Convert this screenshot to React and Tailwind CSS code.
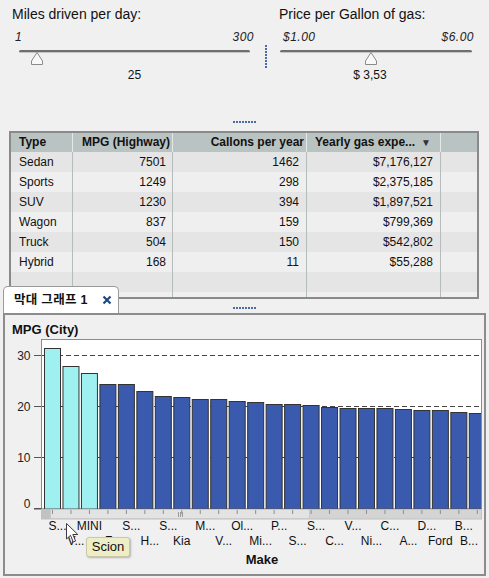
import React from 'react';

const rows = [
  ['Sedan', '7501', '1462', '$7,176,127'],
  ['Sports', '1249', '298', '$2,375,185'],
  ['SUV', '1230', '394', '$1,897,521'],
  ['Wagon', '837', '159', '$799,369'],
  ['Truck', '504', '150', '$542,802'],
  ['Hybrid', '168', '11', '$55,288'],
  ['', '', '', ''],
  ['', '', '', ''],
];

// bar tops in page pixels, zero line at y=509
const tops = [
  348, 366, 373, 384, 384, 391, 396, 397, 399, 399, 401, 402, 404, 404, 405, 407, 408, 408,
  408, 409, 410, 410, 412, 413,
];
const rowA = ['S...', 'MINI', 'S...', 'S...', 'M...', 'Ol...', 'P...', 'S...', 'V...', 'C...', 'D...', 'B...'];
const rowB = ['V...', 'F...', 'H...', 'Kia', 'V...', 'Mi...', 'S...', 'C...', 'Ni...', 'A...', 'Ford', 'B...'];

const barX = i => 44 + i * 18.47;

function Thumb() {
  return (
    <svg width="12" height="13" viewBox="0 0 12 13">
      <polygon points="6,0.5 11.5,9 11.5,12.5 0.5,12.5 0.5,9" fill="#f8f8f8" stroke="#8a8a8a" />
    </svg>
  );
}

function Slider({ label, min, max, value, thumbLeft, width, valuePad }) {
  return (
    <div>
      <div className="text-[14px] leading-[16px] text-[#111]">{label}</div>
      <div
        className="mt-[8px] flex justify-between text-[12px] leading-[14px] italic tracking-[0.5px] text-[#222]"
        style={{ marginLeft: min === '1' ? 3 : 4, width: width - (min === '1' ? -8 : 1) }}
      >
        <span>{min}</span>
        <span>{max}</span>
      </div>
      <div className="relative mt-[3px] h-[14px]" style={{ marginLeft: min === '1' ? 7 : 1, width }}>
        <div className="mt-[6px] h-[3px] rounded-full border-t-2 border-[#6f6f6f] bg-[#c4c4c4]" />
        <div className="absolute top-[2px]" style={{ left: thumbLeft }}>
          <Thumb />
        </div>
      </div>
      <div
        className="mt-[4px] text-center text-[12px] leading-[14px] text-[#111]"
        style={{ marginLeft: min === '1' ? 7 : 1, width, paddingRight: valuePad }}
      >
        {value}
      </div>
    </div>
  );
}

function Chart() {
  return (
    <svg width="479" height="235" viewBox="5 339 479 235">
      <defs>
        <clipPath id="plot">
          <rect x="41" y="339" width="440" height="171" />
        </clipPath>
      </defs>
      <rect x="41.5" y="339.5" width="440" height="170" fill="#fff" stroke="#8c8c8c" />
      {[355.5, 406.5, 457.5].map(y => (
        <line key={y} x1="42" x2="481" y1={y} y2={y} stroke="#444" strokeDasharray="5 3" />
      ))}
      {[
        ['30', 355.5, 360],
        ['20', 406.5, 411],
        ['10', 457.5, 462],
        ['0', 508.5, 508],
      ].map(([t, y, b]) => (
        <g key={t}>
          <line x1="34" x2="41" y1={y} y2={y} stroke="#555" />
          <text x="30.5" y={b} fontSize="12" textAnchor="end" fill="#222">
            {t}
          </text>
        </g>
      ))}
      <g clipPath="url(#plot)">
        {tops.map((t, i) => (
          <rect
            key={i}
            x={barX(i) + 0.5}
            y={t + 0.5}
            width="16"
            height={509 - t}
            fill={i < 3 ? '#9ff0f0' : '#3a5aae'}
            stroke="#333"
          />
        ))}
      </g>
      <line x1="34" x2="481" y1="509" y2="509" stroke="#555" />
      {/* scroll strip */}
      <rect x="41.5" y="509.5" width="440" height="9.5" fill="#d4d4d4" stroke="#c0c0c0" />
      <rect x="41.5" y="509.5" width="9" height="9.5" fill="#c2c2c2" />
      <rect x="50.5" y="509.5" width="259" height="9" rx="1.5" fill="#e3e3e3" stroke="#cacaca" />
      {tops.map((_, i) => (
        <line key={i} x1={barX(i) + 8.5} x2={barX(i) + 8.5} y1="510" y2="514" stroke="#8e8e8e" />
      ))}
      {[178.5, 180.5, 182.5].map(x => (
        <line key={x} x1={x} x2={x} y1="512" y2="517" stroke="#9a9a9a" />
      ))}
      {rowA.map((l, k) => {
        const c = barX(k * 2) + 8.5;
        return (
          <text key={k} x={l.endsWith('...') ? c + 5 : c} y="530" fontSize="12" textAnchor="middle" fill="#111">
            {l}
          </text>
        );
      })}
      {rowB.map((l, k) => {
        const c = barX(k * 2 + 1) + 8.5;
        if (k === 11)
          return (
            <text key={k} x="460" y="545" fontSize="12" fill="#111">
              {l}
            </text>
          );
        return (
          <text key={k} x={l.endsWith('...') ? c + 5 : c} y="545" fontSize="12" textAnchor="middle" fill="#111">
            {l}
          </text>
        );
      })}
      <text x="262" y="564" fontSize="13" fontWeight="bold" textAnchor="middle" fill="#111">
        Make
      </text>
    </svg>
  );
}

export default function App() {
  return (
    <div className="w-[489px] h-[578px] overflow-hidden bg-[#f0f0f0] font-['Liberation_Sans','Noto_Sans_CJK_KR',sans-serif] text-[#111]">
      {/* sliders */}
      <div className="flex h-[118px]">
        <div className="w-[265px] pl-[12px] pt-[6px]">
          <Slider label="Miles driven per day:" min="1" max="300" value="25" thumbLeft={12} width={231} valuePad={0} />
        </div>
        <div className="mt-[45px] flex w-[3px] flex-col gap-[1px]">
          {[0, 1, 2, 3, 4, 5, 6, 7].map(i => (
            <div key={i} className="h-[2px] w-[2px] bg-[#4a6ca6]" />
          ))}
        </div>
        <div className="pl-[11px] pt-[6px]">
          <Slider label="Price per Gallon of gas:" min="$1.00" max="$6.00" value="$ 3,53" thumbLeft={85} width={192} valuePad={12} />
        </div>
      </div>

      {/* splitter */}
      <div className="flex h-[13px] justify-center gap-[1px] pt-[3px]">
        {[0, 1, 2, 3, 4, 5, 6, 7].map(i => (
          <div key={i} className="h-[2px] w-[2px] bg-[#4a6ca6]" />
        ))}
      </div>

      {/* table */}
      <div className="ml-[9px] flex h-[168px] w-[470px] flex-col border-2 border-[#8a8a8a] text-[12px]">
        <div className="flex h-[19px] bg-[#b9c3c1] font-bold leading-[19px] text-[#111]">
          <div className="w-[62px] border-r border-[#e4e9e8] pl-[8px]">Type</div>
          <div className="w-[100px] border-r border-[#e4e9e8] pr-[2px] text-right">MPG (Highway)</div>
          <div className="w-[134px] border-r border-[#e4e9e8] pr-[2px] text-right whitespace-nowrap">Callons per year</div>
          <div className="flex w-[134px] justify-between border-r border-[#e4e9e8] pl-[8px] pr-[9px]">
            <span>Yearly gas expe...</span>
            <span className="text-[10px] text-[#333]">▼</span>
          </div>
          <div className="flex-1" />
        </div>
        <div className="flex-1 overflow-hidden">
          {rows.map((r, i) => (
            <div key={i} className={`flex h-[20px] leading-[20px] ${i % 2 === 0 ? 'bg-[#e5e5e5]' : 'bg-[#efefef]'}`}>
              <div className="w-[62px] border-r border-[#b4bdbb] pl-[8px]">{r[0]}</div>
              <div className="w-[100px] border-r border-[#b4bdbb] pr-[6px] text-right">{r[1]}</div>
              <div className="w-[134px] border-r border-[#b4bdbb] pr-[7px] text-right">{r[2]}</div>
              <div className="w-[134px] border-r border-[#b4bdbb] pr-[7px] text-right">{r[3]}</div>
              <div className="flex-1" />
            </div>
          ))}
        </div>
      </div>

      {/* tab row */}
      <div className="relative z-10 -mt-[13px] flex h-[27px] items-end">
        <div className="ml-[3px] flex h-[27px] w-[116px] items-center rounded-t-[5px] border border-b-0 border-[#9a9a9a] bg-white pl-[10px]">
          <span className="text-[12.5px] font-bold tracking-[0.3px]">막대 그래프 1</span>
          <svg className="ml-[14px]" width="10" height="10" viewBox="0 0 10 10">
            <path d="M1.5 1.5 L8.5 8.5 M8.5 1.5 L1.5 8.5" stroke="#1d4a7e" strokeWidth="2.2" />
          </svg>
        </div>
        <div className="mb-[4px] ml-[114px] flex gap-[1px]">
          {[0, 1, 2, 3, 4, 5, 6, 7].map(i => (
            <div key={i} className="h-[2px] w-[2px] bg-[#4a6ca6]" />
          ))}
        </div>
      </div>

      {/* chart panel */}
      <div className="relative ml-[3px] h-[263px] w-[483px] border-2 border-[#8c8c8c] bg-[#f0f0f0]">
        <div className="h-[24px] pl-[7px] pt-[7px] text-[13px] font-bold leading-[16px]">MPG (City)</div>
        <Chart />
        {/* cursor */}
        <svg className="absolute left-[61px] top-[208px]" width="13" height="21" viewBox="0 0 13 21">
          <path d="M0.5 0.5 L0.5 16 L4.5 12.3 L7.3 19 L9.6 18 L6.8 11.5 L11.8 11.5 Z" fill="#fff" stroke="#3a3a4a" />
        </svg>
        {/* tooltip */}
        <div className="absolute left-[81px] top-[222px] flex h-[20px] w-[44px] items-center justify-center rounded-[3px] border border-[#c9c9a8] bg-[#ededc6] text-[13px] shadow-[1px_1px_2px_rgba(0,0,0,0.25)]">
          Scion
        </div>
      </div>
    </div>
  );
}
